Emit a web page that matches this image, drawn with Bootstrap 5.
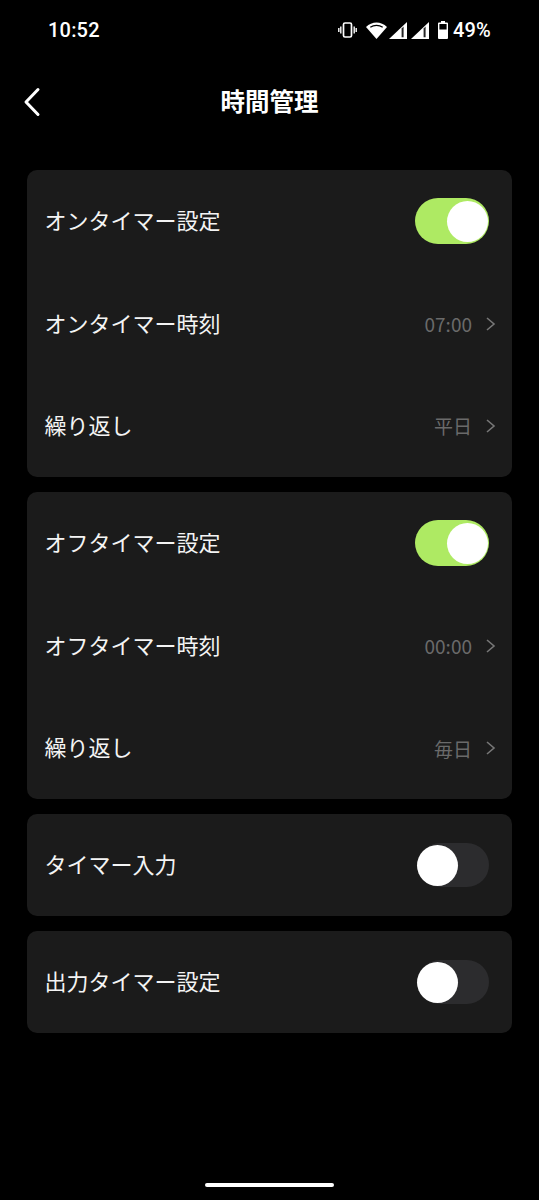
<!DOCTYPE html>
<html lang="ja">
<head>
<meta charset="utf-8">
<title>時間管理</title>
<link href="https://cdn.jsdelivr.net/npm/bootstrap@5.3.0/dist/css/bootstrap.min.css" rel="stylesheet">
<style>
html,body{background:#000;}
body{width:539px;height:1200px;overflow:hidden;color:#fff;font-family:"Noto Sans CJK JP","Noto Sans",sans-serif;}
.phone{height:1200px;}
.statusbar{height:60px;padding:0 48px;font-family:Roboto,sans-serif;font-size:20px;font-weight:500;letter-spacing:.2px;}
.status-icons{margin-right:0;}
.ic-wifi{margin-left:9px;}
.ic-sig1{margin-left:2px;}
.ic-sig2{margin-left:4px;}
.ic-bat{margin-left:9px;}
.pct{margin-left:5px;}
.header{height:84px;padding-left:21px;}
.header-title{font-size:24.5px;font-weight:700;left:0;right:0;top:0;bottom:0;line-height:82px;text-align:center;}
.groups{padding:26px 27px 0;gap:15px;}
.panel{background:#1b1b1b;border-radius:10px;}
.item{height:102.4px;padding:0 16px 0 17.5px;font-size:22px;line-height:1;}
.item-last{height:102px;}
.lbl{margin-bottom:4px;color:#f4f4f4;}
.val{color:#6a6a6a;font-size:19px;font-family:"Noto Sans CJK JP",Roboto,sans-serif;margin-right:13px;}
.sw{width:71px;height:44px;border-radius:22px;background:#2c2c2e;margin-right:7px;}
.sw.on{width:74px;height:46px;border-radius:23px;background:#aeea63;}
.knob{width:41px;height:41px;border-radius:50%;background:#fff;top:1.5px;left:-1px;}
.sw.on .knob{left:32px;top:2.5px;}
.homebar{width:129px;height:4px;border-radius:2px;background:#fff;left:205px;top:1183px;}
</style>
</head>
<body>
<div class="phone position-relative d-flex flex-column">
  <div class="statusbar d-flex align-items-center justify-content-between">
    <span>10:52</span>
    <div class="status-icons d-flex align-items-center">
      <svg width="19" height="16" viewBox="0 0 19 16"><rect x="5.5" y="1" width="8" height="14" rx="1.5" fill="none" stroke="#fff" stroke-width="1.7"/><path d="M2.8 4.5v7M.8 6v4M16.2 4.5v7M18.2 6v4" stroke="#fff" stroke-width="1.4"/></svg>
      <svg class="ic-wifi" width="21" height="17" viewBox="0 0 21 17"><path d="M0 5C5.8-1 15.2-1 21 5L10.5 17Z" fill="#fff"/><path d="M4.3 5.2c3.6-2.4 8.8-2.4 12.4 0" fill="none" stroke="#000" stroke-width="1.3"/></svg>
      <svg class="ic-sig1" width="18" height="17" viewBox="0 0 18 17"><path d="M18 0V17H0Z" fill="#fff"/><path d="M12.6 6.5V15.3h2V4.5Z" fill="#000" opacity=".85"/></svg>
      <svg class="ic-sig2" width="18" height="17" viewBox="0 0 18 17"><path d="M18 0V17H0Z" fill="#fff"/><path d="M12.6 6.5V15.3h2V4.5Z" fill="#000" opacity=".85"/></svg>
      <svg class="ic-bat" width="10" height="18" viewBox="0 0 10 18"><path d="M3 0h4v1.5h2a1 1 0 0 1 1 1V17a1 1 0 0 1-1 1H1a1 1 0 0 1-1-1V2.500a1 1 0 0 1 1-1h2Z" fill="#fff"/><rect x="1.400" y="3" width="7.200" height="5.500" fill="#000"/></svg>
      <span class="pct">49%</span>
    </div>
  </div>
  <div class="header position-relative d-flex align-items-center">
    <div class="header-title position-absolute">時間管理</div>
    <svg width="22" height="30" viewBox="0 0 22 30"><path d="M17 2.500 5 15l12 12.500" fill="none" stroke="#fff" stroke-width="3" stroke-linecap="round" stroke-linejoin="round"/></svg>
  </div>
  <div class="groups d-flex flex-column">
    <div class="panel">
      <div class="item d-flex align-items-center justify-content-between"><span class="lbl">オンタイマー設定</span><div class="sw on position-relative"><div class="knob position-absolute"></div></div></div>
      <div class="item d-flex align-items-center justify-content-between"><span class="lbl">オンタイマー時刻</span><div class="d-flex align-items-center"><span class="val">07:00</span><svg width="11" height="16" viewBox="0 0 11 16"><path d="M2 2l7 6-7 6" fill="none" stroke="#777" stroke-width="1.6"/></svg></div></div>
      <div class="item d-flex align-items-center justify-content-between"><span class="lbl">繰り返し</span><div class="d-flex align-items-center"><span class="val">平日</span><svg width="11" height="16" viewBox="0 0 11 16"><path d="M2 2l7 6-7 6" fill="none" stroke="#777" stroke-width="1.6"/></svg></div></div>
    </div>
    <div class="panel">
      <div class="item d-flex align-items-center justify-content-between"><span class="lbl">オフタイマー設定</span><div class="sw on position-relative"><div class="knob position-absolute"></div></div></div>
      <div class="item d-flex align-items-center justify-content-between"><span class="lbl">オフタイマー時刻</span><div class="d-flex align-items-center"><span class="val">00:00</span><svg width="11" height="16" viewBox="0 0 11 16"><path d="M2 2l7 6-7 6" fill="none" stroke="#777" stroke-width="1.6"/></svg></div></div>
      <div class="item d-flex align-items-center justify-content-between"><span class="lbl">繰り返し</span><div class="d-flex align-items-center"><span class="val">毎日</span><svg width="11" height="16" viewBox="0 0 11 16"><path d="M2 2l7 6-7 6" fill="none" stroke="#777" stroke-width="1.6"/></svg></div></div>
    </div>
    <div class="panel">
      <div class="item item-last d-flex align-items-center justify-content-between"><span class="lbl">タイマー入力</span><div class="sw position-relative"><div class="knob position-absolute"></div></div></div>
    </div>
    <div class="panel">
      <div class="item item-last d-flex align-items-center justify-content-between"><span class="lbl">出力タイマー設定</span><div class="sw position-relative"><div class="knob position-absolute"></div></div></div>
    </div>
  </div>
  <div class="homebar position-absolute"></div>
</div>
<script src="https://cdn.jsdelivr.net/npm/bootstrap@5.3.0/dist/js/bootstrap.bundle.min.js"></script>
</body>
</html>
